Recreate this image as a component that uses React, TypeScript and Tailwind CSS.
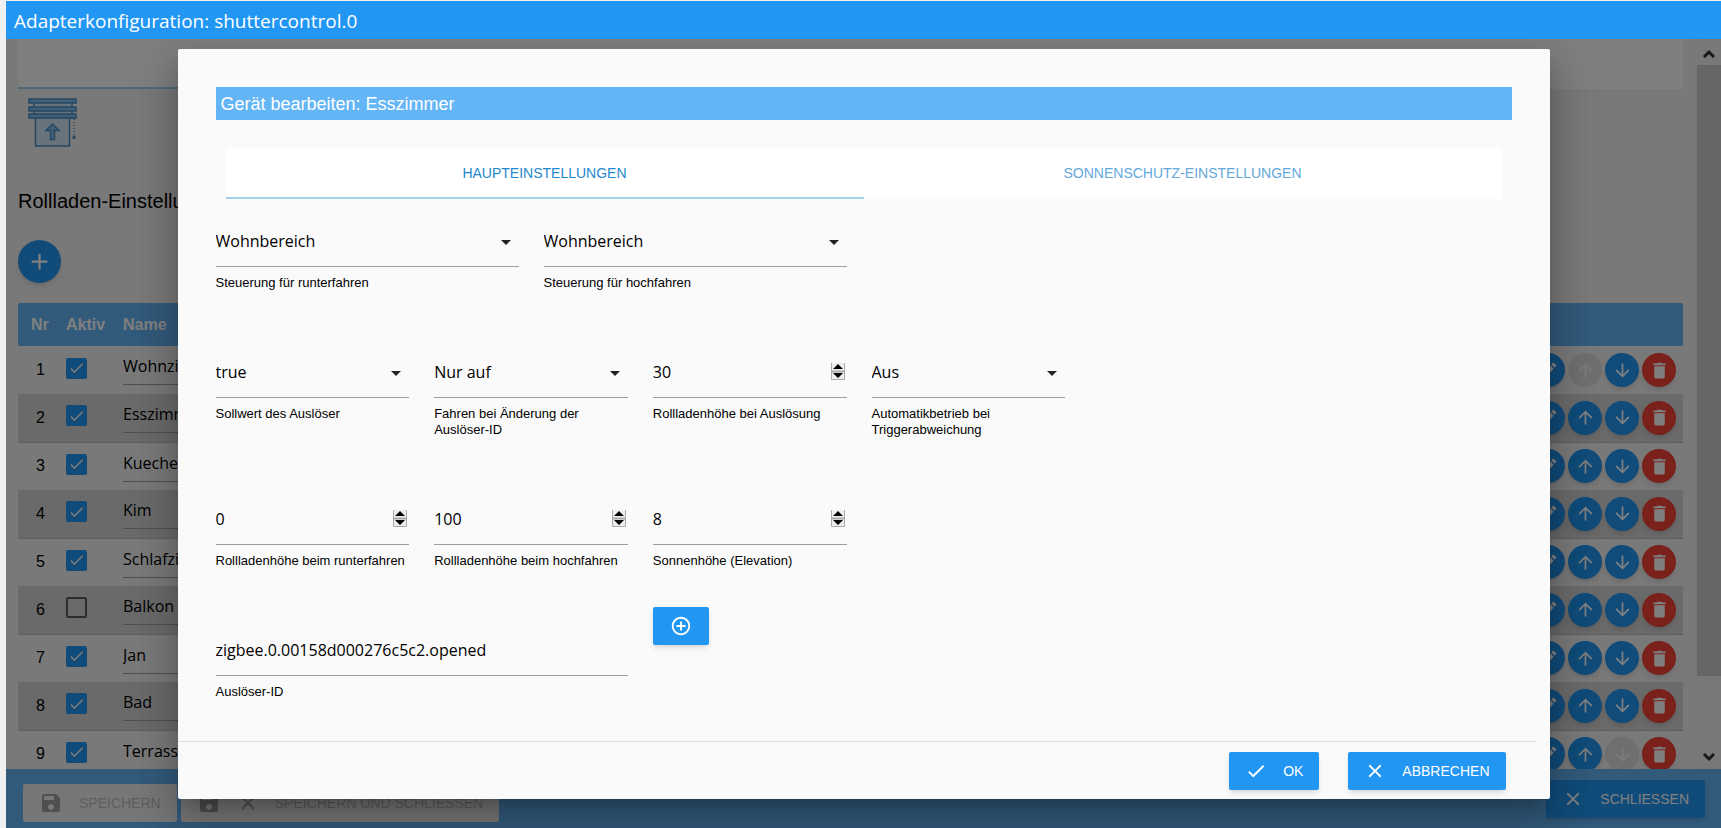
import { useState } from "react";
import type { ReactNode } from "react";
import clsx from "clsx";
import {
  MdAdd,
  MdArrowDownward,
  MdArrowUpward,
  MdCheck,
  MdClose,
  MdControlPoint,
  MdDelete,
  MdEdit,
  MdSave,
} from "react-icons/md";

const devices = [
  { nr: 1, name: "Wohnzimmer", active: true },
  { nr: 2, name: "Esszimmer", active: true },
  { nr: 3, name: "Kueche", active: true },
  { nr: 4, name: "Kim", active: true },
  { nr: 5, name: "Schlafzimmer", active: true },
  { nr: 6, name: "Balkon", active: false },
  { nr: 7, name: "Jan", active: true },
  { nr: 8, name: "Bad", active: true },
  { nr: 9, name: "Terrasse", active: true },
];

const inputFont = "font-['Open_Sans','Noto_Sans',sans-serif]";

function ShutterIcon() {
  return (
    <svg
      viewBox="0 0 50 50"
      className="size-[50px]"
      fill="#d0e6f6"
      stroke="#4a90c8"
      strokeWidth="1.5"
      aria-hidden="true"
    >
      <path d="M6 4h38v16H6z" />
      <path d="M1 1h47v4H1zM1 9h47v4H1zM1 16h47v4H1z" fill="#84bfec" />
      <path d="M7.500 20h34v28h-34z" />
      <path d="M24.500 26l6.500 6.500h-4.500v9h-4v-9H18z" fill="#84bfec" />
      <path d="M46 21v17" strokeDasharray="1 2" />
      <circle cx="46" cy="39.500" r="1" fill="#4a90c8" />
    </svg>
  );
}

type FieldProps = {
  id: string;
  label: string;
  className?: string;
  children: ReactNode;
};

function Field({ id, label, className, children }: FieldProps) {
  return (
    <div className={className}>
      <div className="relative h-[49px] border-b border-[#9e9e9e]">{children}</div>
      <label htmlFor={id} className="mt-2 block text-[13px] leading-4 text-black">
        {label}
      </label>
    </div>
  );
}

type SelectFieldProps = {
  id: string;
  label: string;
  options: string[];
  className?: string;
};

function SelectField({ id, label, options, className }: SelectFieldProps) {
  return (
    <Field id={id} label={label} className={className}>
      <select
        id={id}
        className={clsx("size-full appearance-none bg-transparent pb-0.5 text-base text-black outline-none", inputFont)}
      >
        {options.map((option) => (
          <option key={option}>{option}</option>
        ))}
      </select>
      <svg
        viewBox="0 0 10 5"
        className="pointer-events-none absolute top-[22px] right-2 h-[5px] w-2.5"
        aria-hidden="true"
      >
        <path d="M0 0h10L5 5z" fill="#222" />
      </svg>
    </Field>
  );
}

type NumberFieldProps = {
  id: string;
  label: string;
  value: number;
  className?: string;
};

function NumberField({ id, label, value, className }: NumberFieldProps) {
  return (
    <Field id={id} label={label} className={className}>
      <input
        id={id}
        type="number"
        defaultValue={value}
        className={clsx(
          "size-full appearance-none bg-transparent pb-0.5 text-base text-black outline-none [&::-webkit-inner-spin-button]:appearance-none",
          inputFont
        )}
      />
      <svg
        viewBox="0 0 14 17"
        className="pointer-events-none absolute top-3.5 right-0.5 h-[17px] w-3.5"
        aria-hidden="true"
      >
        <path d="M.5 0v16.500h13V0" fill="#eee" stroke="#aaa" />
        <path d="M0 8.500h14" stroke="#aaa" strokeWidth="2" />
        <path d="M2 6h10L7 1zM2 10h10l-5 5z" fill="#000" />
      </svg>
    </Field>
  );
}

type RoundButtonProps = {
  label: string;
  color?: string;
  disabled?: boolean;
  children: ReactNode;
};

function RoundButton({ label, color = "bg-[#2196f3]", disabled, children }: RoundButtonProps) {
  return (
    <button
      type="button"
      aria-label={label}
      disabled={disabled}
      className={clsx(
        "flex size-[34px] items-center justify-center rounded-full text-[21px]",
        disabled ? "bg-[#dfdfdf] text-[#f8f8f8]" : "text-white shadow-md",
        !disabled && color
      )}
    >
      {children}
    </button>
  );
}

function DeviceTable() {
  return (
    <table className="w-full table-fixed border-collapse">
      <thead>
        <tr className="h-[43px] text-left text-base text-white">
          <th className="w-12 rounded-l-xs bg-[#64b5f6] pl-[13px]">Nr</th>
          <th className="w-[57px] bg-[#64b5f6]">Aktiv</th>
          <th className="bg-[#64b5f6]">Name</th>
          <th className="w-40 rounded-r-xs bg-[#64b5f6]" />
        </tr>
      </thead>
      <tbody>
        {devices.map((device, index) => (
          <tr key={device.nr} className="h-12 even:border-b even:border-[#bdbdbd] even:bg-[#d4d4d4]">
            <td className="pl-[18px] text-base">{device.nr}</td>
            <td className="pb-1">
              <label className="relative block w-fit">
                <input
                  type="checkbox"
                  aria-label={`${device.name} aktiv`}
                  defaultChecked={device.active}
                  className="peer sr-only"
                />
                <span className="flex size-[21px] items-center justify-center rounded-xs border-2 border-[#5a5a5a] text-lg text-transparent peer-checked:border-[#2196f3] peer-checked:bg-[#2196f3] peer-checked:text-white">
                  <MdCheck aria-hidden="true" />
                </span>
              </label>
            </td>
            <td className="pt-1 align-top">
              <input
                aria-label={`Name ${device.nr}`}
                defaultValue={device.name}
                className={clsx("h-[35px] w-40 border-b border-[#9e9e9e] bg-transparent pb-0.5 text-base outline-none", inputFont)}
              />
            </td>
            <td>
              <div className="flex justify-end gap-[3px] pr-[7px]">
                <RoundButton label="Bearbeiten">
                  <MdEdit />
                </RoundButton>
                <RoundButton label="Nach oben" disabled={index === 0}>
                  <MdArrowUpward />
                </RoundButton>
                <RoundButton label="Nach unten" disabled={index === devices.length - 1}>
                  <MdArrowDownward />
                </RoundButton>
                <RoundButton label="Löschen" color="bg-[#f44336]">
                  <MdDelete />
                </RoundButton>
              </div>
            </td>
          </tr>
        ))}
      </tbody>
    </table>
  );
}

function Scrollbar() {
  return (
    <div className="flex w-6 shrink-0 flex-col items-center bg-[#f0f0f0]" aria-hidden="true">
      <svg viewBox="0 0 24 26" className="h-[26px] w-6" fill="none" stroke="#333" strokeWidth="3">
        <path d="M7 18l5-5 5 5" />
      </svg>
      <div className="w-full grow-[611] bg-[#cdcdcd]" />
      <div className="grow-[67]" />
      <svg viewBox="0 0 24 26" className="h-[26px] w-6" fill="none" stroke="#333" strokeWidth="3">
        <path d="M7 11l5 5 5-5" />
      </svg>
    </div>
  );
}

const buttonBase = "flex h-[38px] items-center gap-4 rounded-xs px-4 text-sm uppercase";

function EditDialog() {
  const [tab, setTab] = useState("main");
  const tabs = [
    { id: "main", label: "Haupteinstellungen" },
    { id: "sun", label: "Sonnenschutz-Einstellungen" },
  ];

  return (
    <div
      role="dialog"
      aria-label="Gerät bearbeiten"
      className="w-4/5 rounded-xs bg-[#fafafa] shadow-[0_24px_38px_3px_rgba(0,0,0,0.14),0_9px_46px_8px_rgba(0,0,0,0.12),0_11px_15px_-7px_rgba(0,0,0,0.2)]"
    >
      <div className="px-[38px] pt-[38px] pb-[41px]">
        <h2 className="bg-[#64b5f6] pt-px pl-[5px] text-lg leading-8 text-white">Gerät bearbeiten: Esszimmer</h2>

        <div role="tablist" className="mx-2.5 mt-7 flex h-[51px] bg-white">
          {tabs.map((item) => (
            <button
              key={item.id}
              type="button"
              role="tab"
              aria-selected={tab === item.id}
              onClick={() => setTab(item.id)}
              className={clsx(
                "flex-1 border-b-2 text-sm uppercase",
                tab === item.id ? "border-[#a6d0ea] text-[#2488cc]" : "border-transparent text-[#64a8dc]"
              )}
            >
              {item.label}
            </button>
          ))}
        </div>

        {/* Form */}
        <form className="mt-[19px] mr-[9px]">
          <div className="grid grid-cols-12 gap-x-[25px]">
            <SelectField id="down" label="Steuerung für runterfahren" options={["Wohnbereich"]} className="col-span-3" />
            <SelectField id="up" label="Steuerung für hochfahren" options={["Wohnbereich"]} className="col-span-3" />
          </div>
          <div className="mt-[58px] grid grid-cols-12 gap-x-[25px]">
            <SelectField id="trigger" label="Sollwert des Auslöser" options={["true", "false"]} className="col-span-2" />
            <SelectField
              id="change"
              label="Fahren bei Änderung der Auslöser-ID"
              options={["Nur auf", "Aus"]}
              className="col-span-2"
            />
            <NumberField id="triggerHeight" label="Rollladenhöhe bei Auslösung" value={30} className="col-span-2" />
            <SelectField
              id="auto"
              label="Automatikbetrieb bei Triggerabweichung"
              options={["Aus", "An"]}
              className="col-span-2"
            />
          </div>
          <div className="mt-[58px] grid grid-cols-12 gap-x-[25px]">
            <NumberField id="heightDown" label="Rollladenhöhe beim runterfahren" value={0} className="col-span-2" />
            <NumberField id="heightUp" label="Rollladenhöhe beim hochfahren" value={100} className="col-span-2" />
            <NumberField id="elevation" label="Sonnenhöhe (Elevation)" value={8} className="col-span-2" />
          </div>
          <div className="mt-[38px] grid grid-cols-12 gap-x-[25px]">
            <Field id="triggerId" label="Auslöser-ID" className="col-span-4 pt-5">
              <input
                id="triggerId"
                defaultValue="zigbee.0.00158d000276c5c2.opened"
                className={clsx("size-full bg-transparent pb-0.5 text-base text-black outline-none", inputFont)}
              />
            </Field>
            <button
              type="button"
              aria-label="ID auswählen"
              className="col-span-2 flex h-[38px] w-14 items-center justify-center rounded-xs bg-[#2196f3] text-[22px] text-white shadow-md"
            >
              <MdControlPoint />
            </button>
          </div>
        </form>
      </div>

      <div className="mr-[13px] border-t border-[#e0e0e0]" />
      <div className="flex justify-end gap-[29px] pt-2.5 pr-11 pb-[9px]">
        <button type="button" className={clsx(buttonBase, "bg-[#2196f3] text-white shadow-md")}>
          <MdCheck className="text-[22px]" />
          OK
        </button>
        <button type="button" className={clsx(buttonBase, "bg-[#2196f3] text-white shadow-md")}>
          <MdClose className="text-[22px]" />
          Abbrechen
        </button>
      </div>
    </div>
  );
}

export default function App() {
  return (
    <div className="flex h-screen flex-col overflow-hidden bg-[#f0f0f0] pt-px pl-1.5 font-['Liberation_Sans',Arial,sans-serif]">
      <header className="flex h-[38px] shrink-0 items-center bg-[#2196f3] pt-0.5 pl-2">
        <h1 className={clsx("text-[19px] text-white", inputFont)}>Adapterkonfiguration: shuttercontrol.0</h1>
      </header>

      <main className="relative flex min-h-0 flex-1 flex-col overflow-hidden bg-[#f2f2f2]">
        <div className="flex min-h-0 flex-1">
          <div className="min-w-0 flex-1 overflow-hidden pr-3.5 pl-3">
            <div className="h-[50px] bg-white">
              <div className="h-full w-1/2 border-b-2 border-[#a6d0ea]" />
            </div>
            <div className="pt-[9px] pl-2.5">
              <ShutterIcon />
            </div>
            <h2 className="mt-[41px] text-xl leading-6">Rollladen-Einstellungen</h2>
            <button
              type="button"
              aria-label="Gerät hinzufügen"
              className="mt-[27px] mb-5 flex size-[43px] items-center justify-center rounded-full bg-[#2196f3] text-[27px] text-white shadow-md"
            >
              <MdAdd />
            </button>
            <DeviceTable />
          </div>
          <Scrollbar />
        </div>

        <footer className="flex h-[59px] shrink-0 items-center gap-1 bg-[#64b5f6] pr-4 pl-[17px]">
          <button type="button" disabled className={clsx(buttonBase, "mt-2 bg-[#eee] text-[#bbb]")}>
            <MdSave className="text-2xl text-[#9f9f9f]" />
            Speichern
          </button>
          <button type="button" disabled className={clsx(buttonBase, "mt-2 bg-[#eee] text-[#bbb]")}>
            <MdSave className="text-2xl text-[#9f9f9f]" />
            <MdClose className="text-[22px] text-[#9f9f9f]" />
            Speichern und schliessen
          </button>
          <button type="button" className={clsx(buttonBase, "ml-auto bg-[#2196f3] text-white shadow-md")}>
            <MdClose className="text-[22px]" />
            Schliessen
          </button>
        </footer>

        {/* Modal overlay */}
        <div className="absolute inset-0 flex items-start justify-center bg-black/50 pt-2.5">
          <EditDialog />
        </div>
      </main>
    </div>
  );
}
